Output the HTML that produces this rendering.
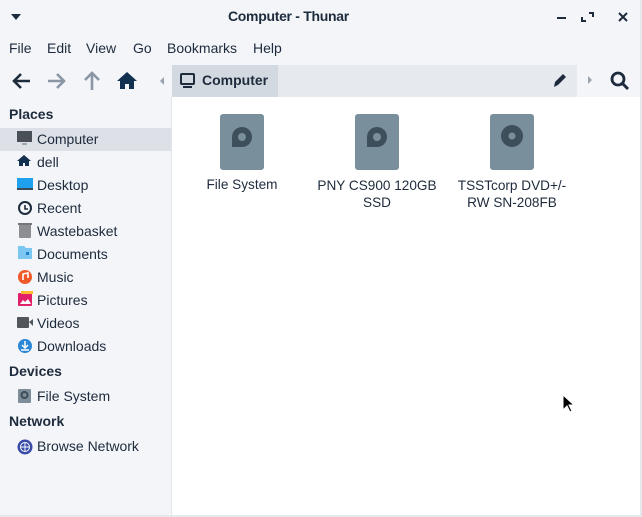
<!DOCTYPE html>
<html><head><meta charset="utf-8"><style>
*{margin:0;padding:0;box-sizing:border-box}
body{width:642px;height:517px;overflow:hidden;background:#f3f5f9;font-family:"Liberation Sans",sans-serif;color:#1e2b3c;position:relative}
.a{position:absolute}
.t{font-size:14px;white-space:nowrap}
.h{font-size:14px;font-weight:bold}
.l{font-size:13.6px;white-space:nowrap}
</style></head><body>
<svg class="a" style="left:10px;top:13px" width="12" height="8"><path d="M1 1h10L6 7z" fill="#1e2b3c"/></svg>
<div class="a" style="left:228px;top:8px;font-size:14px;font-weight:bold;color:#1e2b3c;white-space:nowrap;letter-spacing:-0.3px">Computer - Thunar</div>
<svg class="a" style="left:552px;top:10px" width="80" height="14">
<path d="M5 8h9" stroke="#1e2b3c" stroke-width="2"/>
<path d="M37 3h4v4M34 11h-4v-4" stroke="#1e2b3c" stroke-width="2" fill="none"/>
<path d="M67 3l8 8M75 3l-8 8" stroke="#1e2b3c" stroke-width="2"/>
</svg>
<div class="a t" style="left:9px;top:40px">File</div>
<div class="a t" style="left:47px;top:40px">Edit</div>
<div class="a t" style="left:86px;top:40px">View</div>
<div class="a t" style="left:133px;top:40px">Go</div>
<div class="a t" style="left:167px;top:40px">Bookmarks</div>
<div class="a t" style="left:253px;top:40px">Help</div>
<svg class="a" style="left:10px;top:69px" width="160" height="24">
<path d="M4 12h16M11 5l-7 7 7 7" stroke="#1e2b3c" stroke-width="2.6" fill="none"/>
<path d="M38 12h16M47 5l7 7-7 7" stroke="#8a96a4" stroke-width="2.6" fill="none"/>
<path d="M82 4v17M75 11l7-7 7 7" stroke="#8a96a4" stroke-width="2.6" fill="none"/>
<path d="M117 3l10 9h-3v8h-5v-5h-4v5h-5v-8h-3z" fill="#12304f"/>
<path d="M150 12l4-4v8z" fill="#9aa3ad"/>
</svg>
<div class="a" style="left:172px;top:65px;width:405px;height:32px;background:#e6e9ee"></div>
<div class="a" style="left:172px;top:65px;width:106px;height:32px;background:#d3d9e1"></div>
<svg class="a" style="left:179px;top:72px" width="18" height="18"><rect x="2" y="2" width="13" height="10" rx="1" stroke="#1e2b3c" stroke-width="2" fill="none"/><path d="M4 15h9" stroke="#1e2b3c" stroke-width="2"/></svg>
<div class="a h" style="left:202px;top:72px">Computer</div>
<svg class="a" style="left:551px;top:71px" width="18" height="18"><path d="M3 16l1-5 8-8 3 3-8 8z" fill="#1e2b3c"/></svg>
<svg class="a" style="left:586px;top:74px" width="8" height="12"><path d="M2 2l4 4-4 4z" fill="#9aa3ad"/></svg>
<svg class="a" style="left:608px;top:69px" width="24" height="24"><circle cx="10" cy="10" r="6" stroke="#1e2b3c" stroke-width="2.8" fill="none"/><path d="M14 14l6 6" stroke="#1e2b3c" stroke-width="3"/></svg>
<div class="a" style="left:172px;top:97px;width:468px;height:418px;background:#fff"></div>
<div class="a" style="left:171px;top:97px;width:1px;height:420px;background:#e2e5ea"></div>
<div class="a" style="left:640px;top:0;width:2px;height:517px;background:#e6e8ec"></div>
<div class="a" style="left:0;top:515px;width:642px;height:2px;background:#e6e8ec"></div>
<div class="a h" style="left:9px;top:106px">Places</div>
<div class="a" style="left:0;top:128px;width:171px;height:23px;background:#dde1e7"></div>
<svg class="a" style="left:16px;top:130px" width="18" height="230">
<rect x="1" y="1" width="15" height="11" fill="#4a5057"/><rect x="6" y="13" width="5" height="2" fill="#9aa"/>
<path d="M8 25l7 6h-2v5h-4v-3h-2v3h-4v-5h-2z" fill="#12304f"/>
<rect x="1" y="48" width="16" height="12" fill="#1ea0ef"/><rect x="1" y="58" width="16" height="2" fill="#3c4a58"/>
<circle cx="9" cy="78" r="6" stroke="#1e2b3c" stroke-width="2" fill="none"/><path d="M9 75v4h3" stroke="#1e2b3c" stroke-width="1.6" fill="none"/>
<rect x="3" y="94" width="12" height="14" rx="1" fill="#8b8f94"/><rect x="2" y="93" width="14" height="2" fill="#777"/>
<path d="M2 116h6l2 2h6v11h-14z" fill="#7cc6f2"/><rect x="10" y="122" width="3" height="3" fill="#1e80c8"/>
<circle cx="9" cy="147" r="7" fill="#f0592a"/><path d="M7 150v-6l5-1v5" stroke="#fff" stroke-width="1.6" fill="none"/>
<rect x="2" y="163" width="14" height="13" rx="1" fill="#e2206a"/><rect x="5" y="161" width="12" height="3" fill="#ffb92e"/><path d="M4 174l3-4 2 2 3-3 3 5z" fill="#fff"/>
<rect x="1" y="187" width="12" height="11" rx="1" fill="#51565c"/><path d="M13 192l4-3v7z" fill="#51565c"/>
<circle cx="9" cy="216" r="7" fill="#2a86d6"/><path d="M9 211v6M6 215l3 3 3-3M5 220h8" stroke="#fff" stroke-width="1.5" fill="none"/>
</svg>
<div class="a t" style="left:37px;top:131px">Computer</div>
<div class="a t" style="left:37px;top:154px">dell</div>
<div class="a t" style="left:37px;top:177px">Desktop</div>
<div class="a t" style="left:37px;top:200px">Recent</div>
<div class="a t" style="left:37px;top:223px">Wastebasket</div>
<div class="a t" style="left:37px;top:246px">Documents</div>
<div class="a t" style="left:37px;top:269px">Music</div>
<div class="a t" style="left:37px;top:292px">Pictures</div>
<div class="a t" style="left:37px;top:315px">Videos</div>
<div class="a t" style="left:37px;top:338px">Downloads</div>
<div class="a h" style="left:9px;top:363px">Devices</div>
<svg class="a" style="left:17px;top:388px" width="16" height="16"><rect x="1" y="1" width="13" height="14" rx="1" fill="#7d8e9a"/><circle cx="7.5" cy="7" r="3" stroke="#3e4c56" stroke-width="2" fill="none"/></svg>
<div class="a t" style="left:37px;top:388px">File System</div>
<div class="a h" style="left:9px;top:413px">Network</div>
<svg class="a" style="left:16px;top:438px" width="18" height="18"><circle cx="9" cy="9" r="7.5" fill="#3a4aa8"/><circle cx="9" cy="9" r="4.5" stroke="#fff" stroke-width="1" fill="none"/><path d="M4.5 9h9M9 4.5v9" stroke="#fff" stroke-width="1"/></svg>
<div class="a t" style="left:37px;top:438px">Browse Network</div>
<svg class="a" style="left:219px;top:113px" width="320" height="58">
<g><rect x="1" y="1" width="44" height="56" rx="3" fill="#7a8f9c"/><path d="M13 34v-10a10 10 0 1 1 10 10z" fill="#3d4f5a"/><circle cx="23" cy="24" r="4" fill="#7a8f9c"/></g>
<g transform="translate(135 0)"><rect x="1" y="1" width="44" height="56" rx="3" fill="#7a8f9c"/><path d="M13 34v-10a10 10 0 1 1 10 10z" fill="#3d4f5a"/><circle cx="23" cy="24" r="4" fill="#7a8f9c"/></g>
<g transform="translate(270 0)"><rect x="1" y="1" width="44" height="56" rx="3" fill="#7a8f9c"/><circle cx="23" cy="23" r="11" fill="#3d4f5a"/><circle cx="23" cy="23" r="3.5" fill="#7a8f9c"/></g>
</svg>
<div class="a l" style="left:182px;width:120px;text-align:center;top:177px">File System</div>
<div class="a l" style="left:307px;width:140px;text-align:center;top:177px;line-height:17px">PNY CS900 120GB<br>SSD</div>
<div class="a l" style="left:442px;width:140px;text-align:center;top:177px;line-height:17px">TSSTcorp DVD+/-<br>RW SN-208FB</div>
<svg class="a" style="left:561px;top:394px" width="14" height="20"><path d="M2 1v15l4-4 3 6 2-1-3-6h5z" fill="#000" stroke="#fff" stroke-width="1"/></svg>
</body></html>
